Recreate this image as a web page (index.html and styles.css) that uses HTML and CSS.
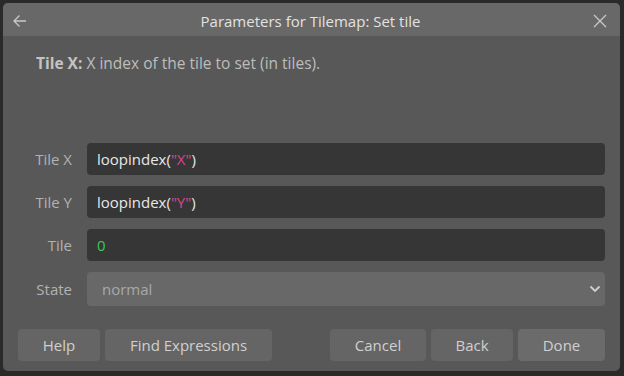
FILE: index.html
```html
<!DOCTYPE html>
<html>
<head>
<meta charset="utf-8">
<link rel="stylesheet" href="styles.css">
</head>
<body>
<div class="dialog">
  <div class="titlebar">
    <svg class="icon back" width="18" height="18" viewBox="0 0 18 18"><path d="M15 9H3M8.5 3.5L3 9l5.5 5.5" fill="none" stroke="#c8c8c8" stroke-width="1.3"/></svg>
    <div class="title">Parameters for Tilemap: Set tile</div>
    <svg class="icon close" width="16" height="16" viewBox="0 0 16 16"><path d="M2 2L14 14M14 2L2 14" fill="none" stroke="#c8c8c8" stroke-width="1.3"/></svg>
  </div>
  <div class="body">
    <p class="desc"><b>Tile X:</b> X index of the tile to set (in tiles).</p>
    <div class="form">
      <label class="lbl">Tile X</label>
      <div class="input">loopindex(<span class="str">"X"</span>)</div>
      <label class="lbl">Tile Y</label>
      <div class="input">loopindex(<span class="str">"Y"</span>)</div>
      <label class="lbl">Tile</label>
      <div class="input"><span class="num">0</span></div>
      <label class="lbl">State</label>
      <div class="select">normal
        <svg class="chev" width="12" height="8" viewBox="0 0 12 8"><path d="M1.5 1.5L6 6l4.5-4.5" fill="none" stroke="#cfcfcf" stroke-width="1.8"/></svg>
      </div>
    </div>
  </div>
  <div class="footer">
    <div class="group">
      <button class="btn w-help">Help</button>
      <button class="btn w-find">Find Expressions</button>
    </div>
    <div class="group">
      <button class="btn w-cancel">Cancel</button>
      <button class="btn w-back">Back</button>
      <button class="btn w-done done">Done</button>
    </div>
  </div>
</div>
</body>
</html>
```
FILE: styles.css
```css
html, body {
  margin: 0;
  padding: 0;
  background: #2a2a2a;
  width: 624px;
  height: 376px;
  overflow: hidden;
  font-family: "Open Sans", "Noto Sans", sans-serif;
}
.dialog {
  margin: 3px 0 0 3px;
  width: 617px;
  height: 368px;
  background: #585858;
  border-radius: 5px;
  overflow: hidden;
  display: flex;
  flex-direction: column;
}
.titlebar {
  height: 33px;
  box-sizing: border-box;
  padding: 2px 12px 0 8px;
  background: #686868;
  display: flex;
  align-items: center;
}
.title {
  flex: 1;
  text-align: center;
  color: #e2e2e2;
  font-size: 15px;
}
.icon { display: block; }
.body {
  flex: 1;
  padding: 0 15px 0 0;
}
.desc {
  margin: 17px 0 0 33px;
  color: #bdbdbd;
  font-size: 15.5px;
  line-height: 20px;
}
.desc b { font-weight: 700; color: #c4c4c4; }
.form {
  margin-top: 70px;
  display: grid;
  grid-template-columns: 84px 1fr;
  row-gap: 11px;
  align-items: center;
}
.lbl {
  text-align: right;
  padding-right: 15px;
  color: #b2b2b2;
  font-size: 15px;
}
.input, .select {
  height: 32px;
  border-radius: 4px;
  background: #363636;
  color: #e8e8e8;
  font-size: 15px;
  display: flex;
  align-items: center;
  padding-left: 10px;
}
.select {
  height: 34px;
  background: #686868;
  color: #a8a8a8;
  padding-left: 15px;
  justify-content: space-between;
  padding-right: 4px;
}
.str { color: #d9468f; }
.num { color: #3dc55a; }
.footer {
  display: flex;
  justify-content: space-between;
  padding: 0 15px 10px 15px;
}
.group { display: flex; gap: 5px; }
.btn {
  height: 32px;
  border: none;
  border-radius: 4px;
  background: #656565;
  color: #d0d0d0;
  font-family: inherit;
  font-size: 15px;
  padding: 0;
}
.btn.done { background: #6b6b6b; }
.w-help { width: 82px; }
.w-find { width: 167px; }
.w-cancel { width: 96px; }
.w-back { width: 82px; }
.w-done { width: 87px; }
```
